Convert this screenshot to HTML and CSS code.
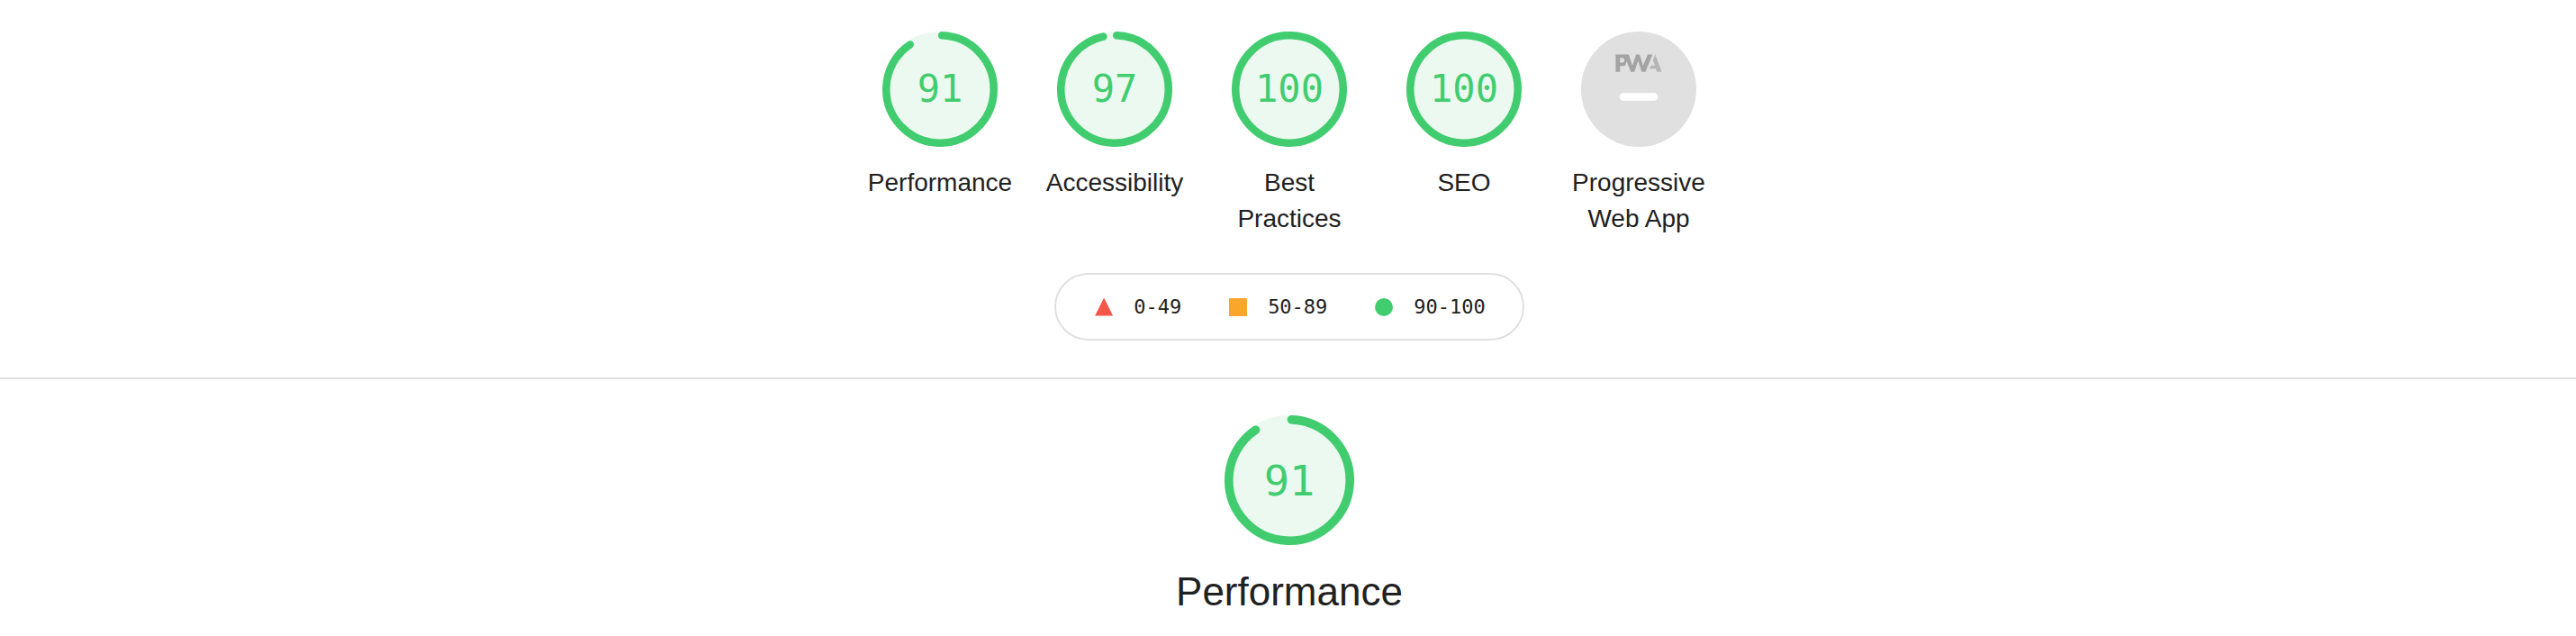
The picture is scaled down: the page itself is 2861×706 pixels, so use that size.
FILE: index.html
```html
<!DOCTYPE html>
<html lang="en">
<head>
<meta charset="utf-8">
<title>Lighthouse Report</title>
<link rel="stylesheet" href="styles.css">
</head>
<body>
<header class="scores">
  <div class="gauges">
    <div class="gauge">
      <div class="gauge__dial">
        <svg class="gauge__svg" viewBox="0 0 120 120">
          <circle class="gauge__base" cx="60" cy="60" r="56" stroke-width="8"></circle>
          <circle class="gauge__arc" cx="60" cy="60" r="56" stroke-width="8" transform="rotate(-87.954 60 60)" stroke-dasharray="316.19 351.86"></circle>
        </svg>
        <div class="gauge__pct">91</div>
      </div>
      <div class="gauge__label">Performance</div>
    </div>
    <div class="gauge">
      <div class="gauge__dial">
        <svg class="gauge__svg" viewBox="0 0 120 120">
          <circle class="gauge__base" cx="60" cy="60" r="56" stroke-width="8"></circle>
          <circle class="gauge__arc" cx="60" cy="60" r="56" stroke-width="8" transform="rotate(-87.954 60 60)" stroke-dasharray="337.30 351.86"></circle>
        </svg>
        <div class="gauge__pct">97</div>
      </div>
      <div class="gauge__label">Accessibility</div>
    </div>
    <div class="gauge">
      <div class="gauge__dial">
        <svg class="gauge__svg" viewBox="0 0 120 120">
          <circle class="gauge__base" cx="60" cy="60" r="56" stroke-width="8"></circle>
          <circle class="gauge__arc" cx="60" cy="60" r="56" stroke-width="8" transform="rotate(-87.954 60 60)" stroke-dasharray="351.86 351.86"></circle>
        </svg>
        <div class="gauge__pct">100</div>
      </div>
      <div class="gauge__label">Best Practices</div>
    </div>
    <div class="gauge">
      <div class="gauge__dial">
        <svg class="gauge__svg" viewBox="0 0 120 120">
          <circle class="gauge__base" cx="60" cy="60" r="56" stroke-width="8"></circle>
          <circle class="gauge__arc" cx="60" cy="60" r="56" stroke-width="8" transform="rotate(-87.954 60 60)" stroke-dasharray="351.86 351.86"></circle>
        </svg>
        <div class="gauge__pct">100</div>
      </div>
      <div class="gauge__label">SEO</div>
    </div>
    <div class="gauge">
      <div class="gauge__dial">
        <svg class="gauge__svg" viewBox="0 0 60 60">
          <circle class="pwa__disc" cx="30" cy="30" r="30"></circle>
          <g class="pwa__logo">
            <path class="pwa__logo--secondary" d="M35.66 19.39l.7-1.75h2L37.4 15 38.6 12l3.4 9h-2.51l-.58-1.61z"></path>
            <path class="pwa__logo--primary" d="M33.52 21l3.65-9h-2.42l-2.5 5.82L30.5 12h-1.86l-1.9 5.82L24.8 12h-2.52l3.63 9h1.86l1.9-5.82 1.9 5.82z"></path>
            <path class="pwa__logo--primary" fill-rule="evenodd" d="M20.3 17.91h1.48c.45 0 .85-.05 1.2-.15l.39-1.18 1.07-3.3a2.64 2.64 0 0 0-.28-.37c-.55-.6-1.36-.91-2.42-.91H18v9h2.3V17.9zm1.96-3.84c.22.22.33.5.33.87 0 .36-.1.65-.29.87-.2.23-.59.35-1.15.35h-.86v-2.41h.87c.52 0 .89.11 1.1.32z"></path>
          </g>
          <rect class="pwa__na-line" x="20" y="32" width="20" height="4" rx="2"></rect>
        </svg>
      </div>
      <div class="gauge__label">Progressive Web App</div>
    </div>
  </div>
  <div class="scale-row">
    <div class="scorescale">
      <span class="range range--fail">0-49</span>
      <span class="range range--average">50-89</span>
      <span class="range range--pass">90-100</span>
    </div>
  </div>
</header>
<div class="divider"></div>
<section class="category">
  <div class="gauge__dial gauge__dial--big">
    <svg class="gauge__svg" viewBox="0 0 120 120">
      <circle class="gauge__base" cx="60" cy="60" r="56" stroke-width="8"></circle>
      <circle class="gauge__arc" cx="60" cy="60" r="56" stroke-width="8" transform="rotate(-87.954 60 60)" stroke-dasharray="316.19 351.86"></circle>
    </svg>
    <div class="gauge__pct gauge__pct--big">91</div>
  </div>
  <h2 class="category__title">Performance</h2>
</section>
</body>
</html>
```

FILE: styles.css
```css
html, body {
  margin: 0;
  padding: 0;
  background: #ffffff;
}

body {
  font-family: "Liberation Sans", Arial, sans-serif;
  color: #212121;
}

.scores {
  padding: 35px 0 0 3px;
}

.gauges {
  display: flex;
  justify-content: center;
  align-items: flex-start;
}

.gauge {
  width: 194px;
  box-sizing: border-box;
  padding: 0 16px;
  display: flex;
  flex-direction: column;
  align-items: center;
}

.gauge__dial {
  position: relative;
  width: 128px;
  height: 128px;
  flex: none;
}

.gauge__dial--big {
  width: 144px;
  height: 144px;
}

.gauge__svg {
  display: block;
  width: 100%;
  height: 100%;
}

.gauge__base {
  fill: #ecf9f0;
  stroke: #ecf9f0;
}

.gauge__arc {
  fill: none;
  stroke: #41cd6f;
  stroke-linecap: round;
}

.gauge__pct {
  position: absolute;
  inset: 0;
  display: flex;
  align-items: center;
  justify-content: center;
  font-family: "DejaVu Sans Mono", monospace;
  font-size: 42px;
  line-height: 1;
  color: #41cd6f;
}

.gauge__pct--big {
  font-size: 47px;
}

.gauge__label {
  margin-top: 20px;
  font-size: 28px;
  line-height: 40px;
  text-align: center;
  color: #212121;
}

.pwa__disc {
  fill: #e0e0e0;
}

.pwa__logo--primary {
  fill: #a3a3a3;
}

.pwa__logo--secondary {
  fill: #b6b6b6;
}

.pwa__na-line {
  fill: #ffffff;
}

.scale-row {
  display: flex;
  justify-content: center;
  margin-top: 40px;
}

.scorescale {
  display: inline-flex;
  align-items: center;
  gap: 53px;
  height: 75px;
  box-sizing: border-box;
  padding: 0 41px 0 43px;
  border: 2px solid #e0e0e0;
  border-radius: 38px;
  font-family: "DejaVu Sans Mono", monospace;
  font-size: 22px;
  color: #212121;
}

.range {
  display: flex;
  align-items: center;
  white-space: nowrap;
}

.range::before {
  content: "";
  display: block;
  width: 20px;
  height: 20px;
  margin-right: 23px;
}

.range--fail::before {
  background: #f5564a;
  clip-path: polygon(50% 0, 100% 100%, 0 100%);
}

.range--average::before {
  background: #f9a62b;
}

.range--pass::before {
  background: #41cd6f;
  border-radius: 50%;
}

.divider {
  margin-top: 41px;
  height: 2px;
  background: #e0e0e0;
}

.category {
  padding: 40px 0 0 3px;
  display: flex;
  flex-direction: column;
  align-items: center;
}

.category__title {
  margin: 26px 0 0;
  font-size: 44px;
  line-height: 1.2;
  font-weight: normal;
  color: #212121;
}
```
